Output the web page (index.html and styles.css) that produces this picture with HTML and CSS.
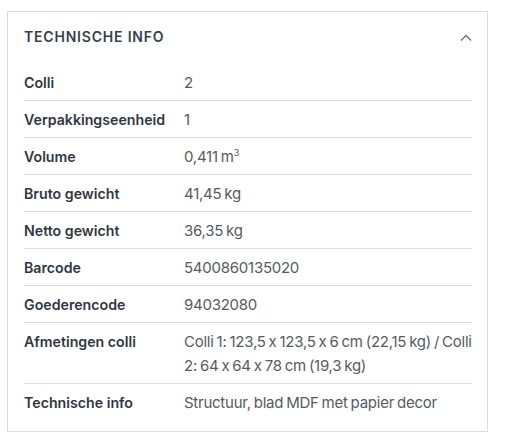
FILE: index.html
```html
<!DOCTYPE html>
<html lang="nl">
<head>
<meta charset="utf-8">
<link rel="stylesheet" href="styles.css">
</head>
<body>
<section class="card">
  <header class="card-head">
    <h2 class="title">TECHNISCHE INFO</h2>
    <svg class="chev" width="12" height="8" viewBox="0 0 12 8"><path d="M1 6.5 L6 1.5 L11 6.5" fill="none" stroke="#6b7280" stroke-width="1.3"/></svg>
  </header>
  <dl class="specs">
    <div class="row"><dt>Colli</dt><dd>2</dd></div>
    <div class="row"><dt>Verpakkingseenheid</dt><dd>1</dd></div>
    <div class="row"><dt>Volume</dt><dd>0,411 m<sup>3</sup></dd></div>
    <div class="row"><dt>Bruto gewicht</dt><dd>41,45 kg</dd></div>
    <div class="row"><dt>Netto gewicht</dt><dd>36,35 kg</dd></div>
    <div class="row"><dt>Barcode</dt><dd>5400860135020</dd></div>
    <div class="row"><dt>Goederencode</dt><dd>94032080</dd></div>
    <div class="row"><dt>Afmetingen colli</dt><dd>Colli 1: 123,5 x 123,5 x 6 cm (22,15 kg) / Colli 2: 64 x 64 x 78 cm (19,3 kg)</dd></div>
    <div class="row"><dt>Technische info</dt><dd>Structuur, blad MDF met papier decor</dd></div>
  </dl>
</section>
</body>
</html>
```
FILE: styles.css
```css
html, body { margin: 0; padding: 0; background: #fff; }
body { padding: 11px 0 0 7px; font-family: Inter, Roboto, "Liberation Sans", sans-serif; }
.card {
  border: 1px solid #dcdcdc;
  padding: 15px 15px 11px 16px;
  box-sizing: content-box;
  width: 448px;
}
.card-head {
  display: flex;
  align-items: center;
  justify-content: space-between;
  height: 20px;
  margin-bottom: 17px;
}
.title {
  margin: 0;
  font-size: 14px;
  font-weight: 600;
  letter-spacing: 0.8px;
  color: #363f4b;
  line-height: 20px;
}
.chev { margin-top: 2px; }
.specs { margin: 0; }
.row {
  display: flex;
  padding: 7px 0 5px;
  line-height: 24px;
  font-size: 14px;
  border-bottom: 1px solid #dcdcdc;
}
.row:last-child { border-bottom: none; }
dt {
  width: 160px;
  flex: none;
  font-weight: 600;
  font-size: 14.2px;
  color: #2f3742;
}
dd {
  margin: 0;
  color: #555b64;
  font-weight: 400;
  font-size: 15px;
  letter-spacing: -0.25px;
  word-spacing: -1px;
}
sup { font-size: 9px; line-height: 0; vertical-align: 6px; }
```
